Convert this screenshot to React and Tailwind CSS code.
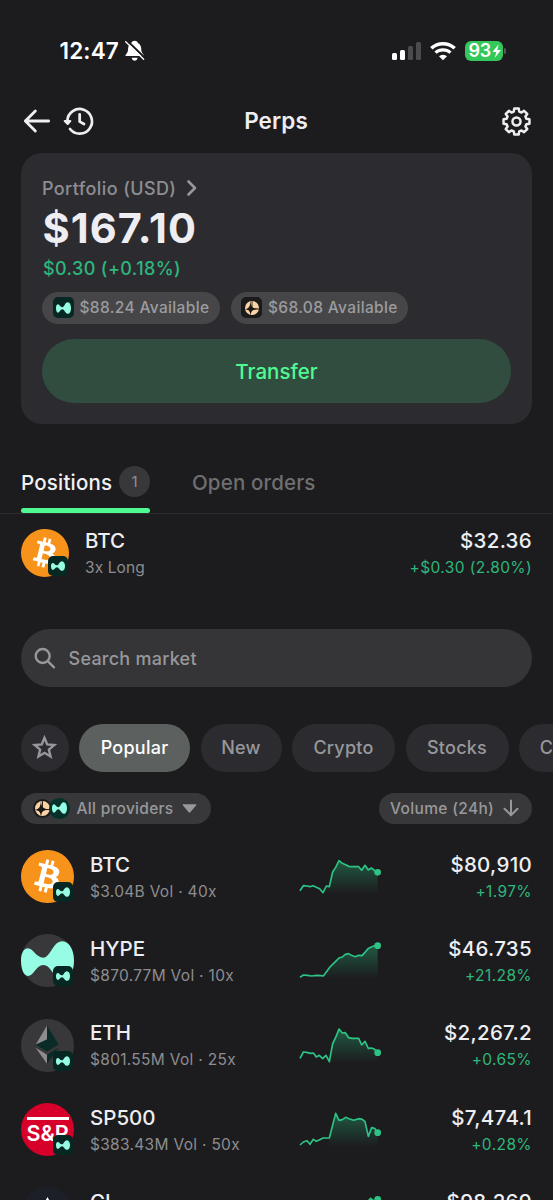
import React from "react";
import { SiBitcoin } from "react-icons/si";

const HYPE_PATH =
  "M63 362C63 340 72 326 84 326C100 326 108 354 130 354C152 354 158 305 187 305C210 305 222 335 222 362C222 395 210 420 188 420C160 420 155 376 130 376C108 376 102 409 84 409C70 409 63 385 63 362Z";

function HypeGlyph({ className }) {
  return (
    <svg viewBox="63 303 159 119" className={className} fill="#97fce4" preserveAspectRatio="none">
      <path d={HYPE_PATH} />
    </svg>
  );
}

function PeachGlyph({ className }) {
  return (
    <svg viewBox="0 0 42 42" className={className}>
      <circle cx="21" cy="21" r="21" fill="#fbd2a4" />
      <path d="M17 -1C18 17 20 22 43 24C22 26 19 28 17 43C14 29 12 26 -1 25C12 23 15 17 17 -1Z" fill="#1b1714" />
      <path d="M17 14L22 21L28 25L21 28L16 34L12 28L5 25L13 21Z" fill="#1b1714" />
      <path d="M21 0V20M22 24H42" stroke="#1b1714" strokeWidth="2.5" />
    </svg>
  );
}

function HypeBadge() {
  return (
    <span className="absolute right-[1px] bottom-[1px] flex h-5 w-5 items-center justify-center rounded-[5px] bg-[#072723]">
      <HypeGlyph className="h-[10px] w-[14px]" />
    </span>
  );
}

function BtcIcon() {
  return (
    <span className="relative block h-full w-full rounded-full">
      <span className="block h-full w-full p-[3px]">
        <span className="block h-full w-full rounded-full bg-white" />
      </span>
      <SiBitcoin className="absolute inset-0 h-full w-full text-[#f7931a]" />
    </span>
  );
}

function HypeIcon() {
  return (
    <svg viewBox="63 283 159 159" className="h-full w-full">
      <circle cx="142.5" cy="362.5" r="79.5" fill="#38383a" />
      <path d={HYPE_PATH} fill="#97fce4" />
    </svg>
  );
}

function EthIcon() {
  return (
    <svg viewBox="63 25.5 159 159" className="h-full w-full">
      <circle cx="142.5" cy="105" r="79.5" fill="#38383a" />
      <path d="M141 45L107 103L141 87Z" fill="#8c8c8c" />
      <path d="M141 45L176 102L141 123L107 103L141 87Z" fill="#0b2c26" />
      <path d="M107 112L141 133V160Z" fill="#8c8c8c" />
      <path d="M176 112L141 133V160Z" fill="#0b2c26" />
    </svg>
  );
}

function SpIcon() {
  return (
    <span className="flex h-full w-full flex-col items-center overflow-hidden rounded-full bg-[#d6002a] pt-[14px]">
      <span className="h-[3px] w-[42px] shrink-0 bg-white" />
      <span className="mt-[2.500px] text-[21.500px] leading-[22px] font-semibold text-white">S&amp;P</span>
    </span>
  );
}

function ClIcon() {
  return (
    <svg viewBox="0 0 53 53" className="h-full w-full">
      <circle cx="26.5" cy="26.5" r="26.5" fill="#1c1f27" />
      <path d="M26.5 10C30 17 36 24 36 31A9.5 9.5 0 0 1 17 31C17 24 23 17 26.5 10Z" fill="#fff" />
    </svg>
  );
}

function Spark({ id, points, mid, from }) {
  const last = points[points.length - 1];
  const line = points.map((p) => p.join(" ")).join("L");
  const area = points.filter((p) => p[0] >= from).map((p) => p.join(" ")).join("L");
  return (
    <svg viewBox={`57 ${mid - 84} 252 168`} className="h-14 w-[84px] shrink-0">
      <defs>
        <linearGradient id={id} x1="0" x2="0" y1={mid - 50} y2={mid + 50} gradientUnits="userSpaceOnUse">
          <stop offset="0" stopColor="#27be80" stopOpacity="0.38" />
          <stop offset="1" stopColor="#27be80" stopOpacity="0" />
        </linearGradient>
      </defs>
      <path d={`M${from} ${mid + 52}L${area}L${last[0]} ${mid + 52}Z`} fill={`url(#${id})`} />
      <path d={`M${line}`} fill="none" stroke="#2cc485" strokeWidth="5" strokeLinejoin="round" />
      <circle cx={last[0]} cy={last[1]} r="10" fill="#2cc485" />
    </svg>
  );
}

const MARKETS = [
  {
    name: "BTC", sub: "$3.04B Vol · 40x", price: "$80,910", change: "+1.97%", icon: <BtcIcon />, mid: 111, from: 128,
    points: [[60, 152], [70, 137], [80, 138], [90, 140], [99, 137], [109, 142], [119, 146], [129, 158], [139, 138], [148, 140], [158, 96], [167, 82], [177, 62], [187, 70], [197, 74], [206, 79], [216, 80], [226, 80], [236, 80], [245, 91], [255, 76], [265, 90], [274, 84], [284, 92], [293, 97]],
  },
  {
    name: "HYPE", sub: "$870.77M Vol · 10x", price: "$46.735", change: "+21.28%", icon: <HypeIcon />, mid: 365, from: 128,
    points: [[60, 411], [70, 404], [82, 405], [95, 407], [110, 405], [122, 406], [130, 407], [139, 395], [150, 380], [164, 366], [177, 353], [187, 350], [196, 342], [206, 340], [214, 345], [226, 349], [236, 345], [246, 346], [255, 336], [264, 325], [274, 320], [284, 316], [293, 316]],
  },
  {
    name: "ETH", sub: "$801.55M Vol · 25x", price: "$2,267.2", change: "+0.65%", icon: <EthIcon />, mid: 108, from: 148,
    points: [[60, 145], [70, 126], [80, 127], [92, 130], [100, 129], [109, 141], [118, 136], [128, 146], [138, 136], [148, 155], [158, 101], [168, 80], [177, 57], [187, 69], [196, 68], [206, 83], [216, 85], [226, 85], [236, 85], [245, 105], [255, 94], [265, 115], [274, 114], [284, 118], [293, 128]],
  },
  {
    name: "SP500", sub: "$383.43M Vol · 50x", price: "$7,474.1", change: "+0.28%", icon: <SpIcon />, mid: 361, from: 148,
    points: [[60, 406], [70, 397], [81, 393], [90, 404], [100, 389], [109, 395], [119, 390], [129, 385], [148, 385], [157, 350], [167, 311], [177, 332], [187, 330], [197, 323], [207, 327], [221, 332], [236, 327], [247, 329], [255, 336], [265, 380], [275, 354], [285, 357], [293, 369]],
  },
  {
    name: "CL", price: "$98.269", icon: <ClIcon />, mid: 614, from: 148,
    points: [[60, 650], [120, 645], [180, 620], [230, 600], [262, 575], [272, 564], [282, 572], [293, 567]],
  },
];

function MarketRow({ m }) {
  return (
    <div className="flex h-[84.35px] shrink-0 items-center">
      <div className="relative mb-[2.500px] h-[53px] w-[53px] shrink-0">
        {m.icon}
        {m.sub && <HypeBadge />}
      </div>
      <div className="ml-4 w-[209px]">
        <div className="h-[27px] text-[20.5px] leading-[27px] font-medium text-[#eeeef2]">{m.name}</div>
        <div className="h-[27px] text-[15.5px] leading-[27px] tracking-[0.3px] whitespace-nowrap text-[#8d8d90]">{m.sub}</div>
      </div>
      <div className="mb-[1px]">
        <Spark id={`spark-${m.name}`} points={m.points} mid={m.mid} from={m.from} />
      </div>
      <div className="ml-auto text-right">
        <div className="h-[27px] text-[20.5px] leading-[27px] font-medium tracking-[0.3px] text-[#eeeef2]">{m.price}</div>
        <div className="h-[27px] text-[15.5px] leading-[27px] tracking-[0.4px] text-[#2eb67d]">{m.change}</div>
      </div>
    </div>
  );
}

function gearPath() {
  const pts = [];
  const step = Math.PI / 4;
  for (let i = 0; i < 8; i++) {
    const a = i * step - Math.PI / 2;
    [[-0.27, 9.9], [-0.17, 12.7], [0.17, 12.7], [0.27, 9.9]].forEach(([d, r]) => {
      pts.push(`${(14 + r * Math.cos(a + d)).toFixed(2)} ${(14 + r * Math.sin(a + d)).toFixed(2)}`);
    });
  }
  return `M${pts.join("L")}Z`;
}

function StatusBar() {
  return (
    <div className="flex h-[100px] shrink-0 items-center pt-[2px] pl-[59px] text-white">
      <span className="w-[61px] pt-px pl-[0.500px] text-[22.5px] leading-none font-semibold tracking-[0.15px]">12:47</span>
      <svg viewBox="372 58 66 70" className="ml-1 h-[23.3px] w-[22px]">
        <path d="M404 63C410 63 413 66 414 70C422 74 424 82 424 92C424 100 432 104 432 109H376C376 104 384 100 384 92C384 82 386 74 394 70C395 66 398 63 404 63Z" fill="#fff" />
        <path d="M395 114H413C412 120 408 123 404 123C400 123 396 120 395 114Z" fill="#fff" />
        <path d="M380 62L436 116" stroke="#1c1c1e" strokeWidth="6" />
        <path d="M377 66L431 119" stroke="#fff" strokeWidth="4" strokeLinecap="round" />
      </svg>
      <div className="ml-[246px] flex h-[18px] w-[30px] items-end gap-[3px]">
        <span className="h-[7px] w-[5px] rounded-[1.5px] bg-white" />
        <span className="h-[10px] w-[5px] rounded-[1.5px] bg-white" />
        <span className="h-[14px] w-[5px] rounded-[1.5px] bg-[#4b4b4d]" />
        <span className="h-[18px] w-[5px] rounded-[1.5px] bg-[#4b4b4d]" />
      </div>
      <svg viewBox="462 60 78 60" className="ml-[8px] h-5 w-[26px]" fill="none" stroke="#fff">
        <path d="M466 82A51 51 0 0 1 536 82" strokeWidth="10.5" />
        <path d="M478.500 95A34 34 0 0 1 523.500 95" strokeWidth="9.5" />
        <path d="M501 118L489 106A17 17 0 0 1 513 106Z" fill="#fff" stroke="none" />
      </svg>
      <div className="ml-[9px] flex h-5 w-[37.500px] items-center rounded-[6px] bg-[#34c759] pl-[3.5px]">
        <span className="w-[23px] text-[18px] leading-none font-semibold tracking-[-0.3px]">93</span>
        <svg viewBox="0 0 10 14" className="h-[14px] w-[9.5px]" fill="#fff">
          <path d="M7 0L0.500 8H4.500L3 14L9.500 6H5.500Z" />
        </svg>
      </div>
      <span className="ml-[1px] h-[6px] w-[2px] rounded-r-full bg-[#5a5a5c]" />
    </div>
  );
}

function Header() {
  return (
    <div className="flex h-[42px] shrink-0 items-center pr-[22px] pl-[20.500px]">
      <svg viewBox="63 258 93 90" className="h-[30px] w-[31px]" fill="none" stroke="#eeeef0" strokeWidth="8.500" strokeLinecap="round" strokeLinejoin="round">
        <path d="M146 303H76M106 273L76 303L106 333" />
      </svg>
      <svg viewBox="189 258 99 90" className="ml-[10.500px] h-[30px] w-[33px]" fill="none" stroke="#eeeef0" strokeWidth="8.200" strokeLinecap="round" strokeLinejoin="round">
        <path d="M213 327A37 37 0 1 0 205 302" />
        <path d="M197 303L206 312L214 303Z" fill="#eeeef0" strokeWidth="6" />
        <path d="M242 283V305L255 312" />
      </svg>
      <h1 className="ml-[147px] w-[68px] text-center text-[22.500px] leading-none font-semibold tracking-[0.1px] text-[#eeeef2]">Perps</h1>
      <svg viewBox="0 0 28 28" className="ml-auto h-[29px] w-[29px]" fill="none" stroke="#eeeef0" strokeWidth="2.400" strokeLinejoin="round">
        <path d={gearPath()} />
        <circle cx="14" cy="14" r="3.9" />
      </svg>
    </div>
  );
}

function Available({ bg, glyph, text }) {
  return (
    <span className="flex h-[31.500px] w-[177.500px] items-center rounded-full bg-[#464648] pl-[10.500px]">
      <span className={`flex h-[21px] w-[21px] items-center justify-center rounded-[5px] ${bg}`}>{glyph}</span>
      <span className="ml-[6px] text-[15.500px] leading-none font-medium tracking-[0.35px] whitespace-nowrap text-[#9c9c9f]">{text}</span>
    </span>
  );
}

function Chip({ children, className }) {
  return (
    <span className={`flex h-[47.500px] shrink-0 items-center justify-center rounded-full text-[18px] font-medium tracking-[0.25px] ${className}`}>
      {children}
    </span>
  );
}

export default function App() {
  return (
    <div className="flex h-[1200px] w-[553px] flex-col overflow-hidden bg-[#1c1c1e] font-['Inter',sans-serif]">
      <StatusBar />
      <Header />

      <section className="mx-[21px] mt-[11px] h-[271px] shrink-0 rounded-[21px] bg-[#2c2c30] px-[21px] pt-[21px]">
        <div className="flex h-7 items-center">
          <span className="pt-px text-[18px] leading-7 font-medium tracking-[0.4px] text-[#8e8e92]">Portfolio (USD)</span>
          <svg viewBox="0 0 12 18" className="ml-[10px] h-[18px] w-3" fill="none" stroke="#98989c" strokeWidth="2.600" strokeLinejoin="round" strokeLinecap="round">
            <path d="M2.500 2.500L9 9L2.500 15.500" />
          </svg>
        </div>
        <div className="h-[53px] pl-[0.500px] text-[41.500px] leading-[53px] font-bold tracking-[1.1px] text-[#eeeef2]">$167.10</div>
        <div className="h-7 pl-px text-[18px] leading-7 font-medium tracking-[0.4px] text-[#2eb67d]">$0.30 (+0.18%)</div>
        <div className="mt-[9px] flex gap-[11px]">
          <Available bg="bg-[#072723]" glyph={<HypeGlyph className="h-[12px] w-[15px]" />} text="$88.24 Available" />
          <Available bg="bg-[#1b1a1b]" glyph={<PeachGlyph className="h-[14px] w-[14px]" />} text="$68.08 Available" />
        </div>
        <button className="mt-[15.500px] flex h-[63.500px] w-full items-center justify-center rounded-full bg-[#304d3f] pt-[3px] text-[20.500px] font-medium text-[#50fa93]">
          Transfer
        </button>
      </section>

      <nav className="mt-[34px] flex h-[56px] shrink-0 border-b border-[#2d2d2f] pl-[21px]">
        <div className="flex h-[55px] w-[129px] flex-col justify-between pt-2">
          <div className="flex h-[31px] items-center justify-between">
            <span className="pt-[3px] text-[20.500px] font-medium tracking-[0.2px] text-[#f2f2f4]">Positions</span>
            <span className="flex h-[31px] w-[31px] items-center justify-center rounded-full bg-[#38383a] pt-px text-[15px] text-[#8e8e92]">1</span>
          </div>
          <div className="h-[5px] rounded-full bg-[#50fa93]" />
        </div>
        <span className="mt-2 ml-[42px] pt-px text-[20.500px] leading-[31px] font-medium tracking-[0.15px] text-[#6f6f72]">Open orders</span>
      </nav>

      <div className="mt-[13px] flex h-[54px] shrink-0 items-center px-[21px]">
        <div className="relative mb-[2px] h-12 w-12 shrink-0">
          <BtcIcon />
          <HypeBadge />
        </div>
        <div className="ml-4">
          <div className="h-[27px] text-[20.500px] leading-[27px] font-medium text-[#eeeef2]">BTC</div>
          <div className="h-[27px] text-[15.500px] leading-[27px] tracking-[0.1px] text-[#8d8d90]">3x Long</div>
        </div>
        <div className="ml-auto text-right">
          <div className="h-[27px] text-[20.500px] leading-[27px] font-medium tracking-[0.3px] text-[#eeeef2]">$32.36</div>
          <div className="h-[27px] text-[15.500px] leading-[27px] tracking-[0.4px] text-[#2eb67d]">+$0.30 (2.80%)</div>
        </div>
      </div>

      <div className="mx-[21px] mt-[48px] flex h-[58px] shrink-0 items-center rounded-full bg-[#353537] pl-[13px]">
        <svg viewBox="102 80 66 66" className="h-[22px] w-[22px]" fill="none" stroke="#98989c" strokeWidth="7" strokeLinecap="round">
          <circle cx="128" cy="107" r="21" />
          <path d="M144 123L162 141" />
        </svg>
        <span className="ml-[12.500px] text-[18px] font-medium tracking-[0.25px] text-[#98989c]">Search market</span>
      </div>

      <div className="mt-[37px] ml-[21px] flex shrink-0 gap-[10.500px] overflow-hidden">
        <Chip className="w-[47.500px] bg-[#2c2c30]">
          <svg viewBox="0 0 24 24" className="h-[25px] w-[25px]" fill="none" stroke="#98989c" strokeWidth="2.300" strokeLinejoin="miter">
            <path d="M12 2.800L14.600 9.100L21.400 9.600L16.200 14L17.800 20.700L12 17.100L6.200 20.700L7.800 14L2.600 9.600L9.400 9.100Z" />
          </svg>
        </Chip>
        <Chip className="w-[111px] bg-[#5c615f] text-white">Popular</Chip>
        <Chip className="w-[81px] bg-[#2c2c30] text-[#98989c]">New</Chip>
        <Chip className="w-[103px] bg-[#2c2c30] text-[#98989c]">Crypto</Chip>
        <Chip className="w-[103px] bg-[#2c2c30] text-[#98989c]">Stocks</Chip>
        <Chip className="w-[55px] bg-[#2c2c30] text-[#98989c]">C</Chip>
      </div>

      <div className="mx-[21px] mt-[21px] flex h-[31.500px] shrink-0 justify-between">
        <div className="flex w-[190px] items-center rounded-full bg-[#38383a] pl-[12px]">
          <span className="flex h-[19px] w-[19px] items-center justify-center rounded-full bg-[#1b1a1b]">
            <PeachGlyph className="h-[15px] w-[15px]" />
          </span>
          <span className="-ml-[3px] flex h-[21px] w-[21px] items-center justify-center rounded-full bg-[#06302a]">
            <HypeGlyph className="h-[12px] w-[15px]" />
          </span>
          <span className="ml-[6.500px] text-[15.500px] font-medium tracking-[0.3px] whitespace-nowrap text-[#98989c]">All providers</span>
          <svg viewBox="0 0 15 9" className="ml-[8.500px] h-[9px] w-[15px]" fill="#98989c">
            <path d="M1.500 0.300H13.500Q15 0.300 14 1.500L8.300 8.200Q7.500 9 6.700 8.200L1 1.500Q0 0.300 1.500 0.300Z" />
          </svg>
        </div>
        <div className="flex w-[153px] items-center rounded-full bg-[#38383a] pl-[11px]">
          <span className="text-[15.500px] font-medium tracking-[0.35px] whitespace-nowrap text-[#98989c]">Volume (24h)</span>
          <svg viewBox="0 0 16 18" className="ml-[8.500px] h-[18px] w-4" fill="none" stroke="#98989c" strokeWidth="2" strokeLinecap="round" strokeLinejoin="round">
            <path d="M8 1.500V16M1.500 9.800L8 16.200L14.500 9.800" />
          </svg>
        </div>
      </div>

      <div className="mt-[11.500px] flex shrink-0 flex-col px-[21px]">
        {MARKETS.map((m) => (
          <MarketRow key={m.name} m={m} />
        ))}
      </div>
    </div>
  );
}
